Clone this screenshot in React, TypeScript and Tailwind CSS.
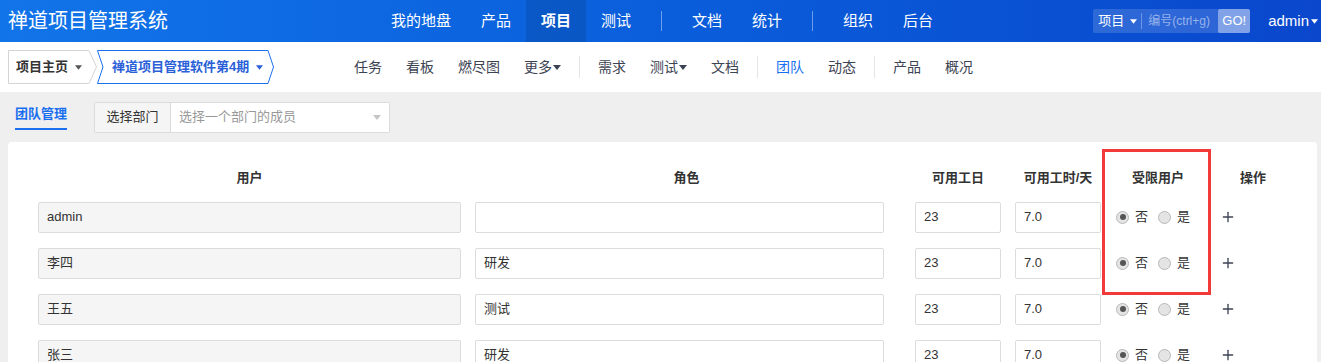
import { Plus } from "lucide-react";

const font = { fontFamily: '"Liberation Sans", "Noto Sans CJK SC", sans-serif' };

function Caret({ className }: { className: string }) {
  return (
    <svg viewBox="0 0 8 5" className={className}>
      <path d="M0 0h8L4 5z" fill="currentColor" />
    </svg>
  );
}

const mainNav = ["我的地盘", "产品", "项目", "测试", "|", "文档", "统计", "|", "组织", "后台"];

const subNav: { label: string; caret?: boolean; active?: boolean; sep?: boolean }[] = [
  { label: "任务" },
  { label: "看板" },
  { label: "燃尽图" },
  { label: "更多", caret: true },
  { label: "", sep: true },
  { label: "需求" },
  { label: "测试", caret: true },
  { label: "文档" },
  { label: "", sep: true },
  { label: "团队", active: true },
  { label: "动态" },
  { label: "", sep: true },
  { label: "产品" },
  { label: "概况" },
];

const members = [
  { name: "admin", role: "" },
  { name: "李四", role: "研发" },
  { name: "王五", role: "测试" },
  { name: "张三", role: "研发" },
  { name: "赵六", role: "研发" },
];

function Radio({ checked }: { checked?: boolean }) {
  return (
    <span className="flex h-[13px] w-[13px] items-center justify-center rounded-full border border-[#b8b8b8] bg-[#e4e4e4]">
      {checked && <span className="h-[6px] w-[6px] rounded-full bg-[#555]" />}
    </span>
  );
}

function Row({ name, role }: { name: string; role: string }) {
  return (
    <div className="grid h-[46px] grid-cols-[437px_440px_100px_86px_114px_1fr] items-center">
      <div className="flex h-[31px] w-[423px] items-center rounded-[2px] border border-[#dcdcdc] bg-[#f5f5f5] px-2">{name}</div>
      <div className="flex h-[31px] w-[409px] items-center rounded-[2px] border border-[#dcdcdc] bg-white px-2">{role}</div>
      <div className="flex h-[31px] w-[86px] items-center rounded-[2px] border border-[#dcdcdc] bg-white px-2">23</div>
      <div className="flex h-[31px] w-[86px] items-center rounded-[2px] border border-[#dcdcdc] bg-white px-2">7.0</div>
      <div className="flex items-center pl-[15px]">
        <Radio checked />
        <span className="ml-[6px]">否</span>
        <span className="ml-[10px]"><Radio /></span>
        <span className="ml-[6px]">是</span>
      </div>
      <div className="pl-[5px] text-[#3c4353]">
        <Plus className="h-4 w-4" strokeWidth={2} />
      </div>
    </div>
  );
}

export default function App() {
  return (
    <div className="min-h-screen bg-[#efefef] text-[13px] text-[#333]" style={font}>
      {/* top bar */}
      <div className="flex h-[42px] items-center bg-linear-to-r from-[#1274e9] to-[#0a47cd] text-white">
        <div className="w-[376px] pl-2 text-[20px] leading-none">禅道项目管理系统</div>
        <div className="flex h-full items-center text-[15px]">
          {mainNav.map((n, i) =>
            n === "|" ? (
              <span key={i} className="mx-[15px] h-[20px] w-px bg-white/40" />
            ) : (
              <span key={i} className={`flex h-full items-center px-[15px] ${n === "项目" && i === 2 ? "bg-black/10 font-bold" : ""}`}>
                {n}
              </span>
            )
          )}
        </div>
        <div className="ml-auto flex items-center">
          <div className="flex h-[24px] items-center rounded-[2px] bg-white/15">
            <span className="flex items-center pl-[5px] pr-[4px]">
              项目
              <Caret className="ml-[6px] h-[5px] w-[7px] text-white" />
            </span>
            <span className="h-[16px] w-px bg-white/30" />
            <span className="w-[76px] pl-[6px] text-[12px] text-white/50">编号(ctrl+g)</span>
            <span className="flex h-full items-center rounded-[2px] bg-white/40 px-[4px] text-[13px]">GO!</span>
          </div>
          <span className="ml-[18px] mr-[3px] flex items-center text-[15px]">
            admin
            <Caret className="ml-[2px] h-[5px] w-[7px] text-white" />
          </span>
        </div>
      </div>

      {/* sub nav */}
      <div className="flex h-[50px] items-center bg-white">
        <div className="ml-2 flex h-[34px] items-center">
          <div className="relative flex h-[34px] w-[89px] items-center pl-[8px] font-bold text-[#333]">
            <svg className="absolute inset-0" width="89" height="34">
              <polygon points="0.5,0.5 81,0.5 88.5,17 81,33.5 0.5,33.5" fill="white" stroke="#d4d4d4" />
            </svg>
            <span className="relative">项目主页</span>
            <Caret className="relative ml-[7px] h-[5px] w-[7px] text-[#555]" />
          </div>
          <div className="relative flex h-[34px] w-[177px] items-center pl-[15px] font-bold text-[#2a5fd8]">
            <svg className="absolute inset-0" width="177" height="34">
              <polygon points="0.5,0.5 171,0.5 176.5,17 171,33.5 0.5,33.5 6,17" fill="white" stroke="#1a6ff0" />
            </svg>
            <span className="relative">禅道项目管理软件第4期</span>
            <Caret className="relative ml-[7px] h-[5px] w-[7px] text-[#2a5fd8]" />
          </div>
        </div>
        <div className="ml-[68px] flex items-center text-[14px] text-[#3c4353]">
          {subNav.map((s, i) =>
            s.sep ? (
              <span key={i} className="mx-[6px] h-[22px] w-px bg-[#e5e5e5]" />
            ) : (
              <span key={i} className={`flex items-center px-[12px] ${s.active ? "text-[#1a6ff0]" : ""}`}>
                {s.label}
                {s.caret && <Caret className="ml-[1px] h-[5px] w-[8px] text-[#3c4353]" />}
              </span>
            )
          )}
        </div>
      </div>

      {/* toolbar */}
      <div className="flex h-[50px] items-center">
        <div className="ml-[15px] flex h-[31px] flex-col justify-center font-bold text-[#1a6ff0]">
          <span className="leading-[20px]">团队管理</span>
          <span className="mt-[4px] h-[2px] w-[52px] bg-[#1a6ff0]" />
        </div>
        <div className="ml-[27px] flex h-[31px] w-[296px] items-stretch rounded-[2px] border border-[#dcdcdc]">
          <span className="flex w-[76px] items-center justify-center border-r border-[#dcdcdc] bg-[#f5f5f5]">选择部门</span>
          <span className="flex flex-1 items-center bg-white pl-[8px] text-[#999]">
            选择一个部门的成员
            <Caret className="ml-auto mr-[8px] h-[5px] w-[8px] text-[#c6c6c6]" />
          </span>
        </div>
      </div>

      {/* team panel */}
      <div className="relative ml-2 mr-1 rounded-[4px] bg-white pb-4 pl-[30px] pt-[20px]">
        <div className="grid h-[32px] grid-cols-[437px_440px_100px_86px_114px_1fr] items-center font-bold">
          <div className="w-[423px] text-center">用户</div>
          <div className="w-[423px] text-center">角色</div>
          <div className="w-[86px] text-center">可用工日</div>
          <div className="w-[86px] text-center">可用工时/天</div>
          <div className="text-center">受限用户</div>
          <div className="w-[76px] text-center">操作</div>
        </div>
        {members.map((m) => (
          <Row key={m.name} name={m.name} role={m.role} />
        ))}
        <div className="pointer-events-none absolute left-[1094px] top-[7px] h-[146px] w-[109px] border-[3px] border-[#f23a3a]" />
      </div>
    </div>
  );
}
